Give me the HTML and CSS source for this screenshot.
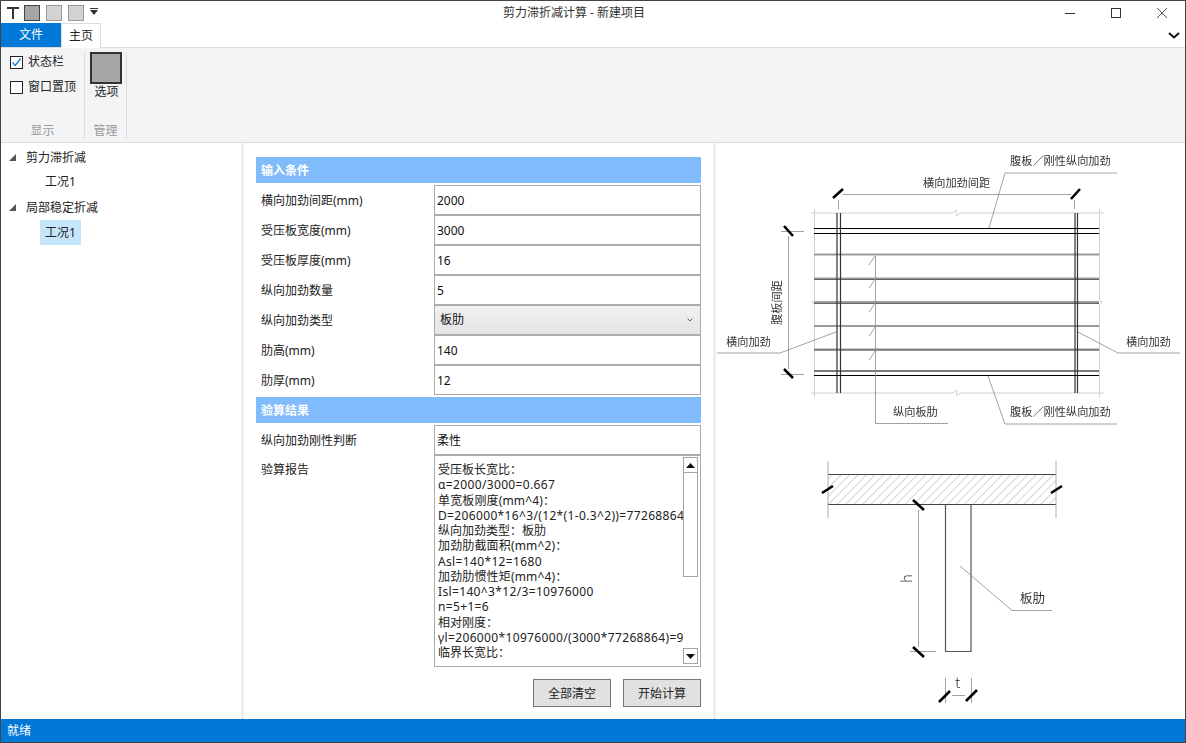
FILE: index.html
```html
<!DOCTYPE html>
<html lang="zh">
<head>
<meta charset="utf-8">
<title>剪力滞折减计算 - 新建项目</title>
<link rel="stylesheet" href="styles.css">
</head>
<body>
<div class="window">
  <header class="titlebar">
    <div class="quick">
      <svg class="qa-t" width="12" height="12" viewBox="0 0 12 12"><path d="M0 1h12M6 1v11" fill="none" stroke="#333" stroke-width="2"/></svg>
      <span class="qa qa-dark"></span>
      <span class="qa qa-light"></span>
      <span class="qa qa-light"></span>
      <svg class="qa-more" width="8" height="7" viewBox="0 0 8 7"><path d="M0 0h8v1H0zM0 2h8L4 7z" fill="#333"/></svg>
    </div>
    <div class="title">剪力滞折减计算 - 新建项目</div>
    <div class="winbtns">
      <span class="winbtn"><svg width="10" height="10" viewBox="0 0 10 10"><path d="M0 5.500h10" stroke="#333" fill="none"/></svg></span>
      <span class="winbtn"><svg width="10" height="10" viewBox="0 0 10 10"><rect x=".5" y=".5" width="9" height="9" stroke="#333" fill="none"/></svg></span>
      <span class="winbtn"><svg width="10" height="10" viewBox="0 0 10 10"><path d="M0 0l10 10M10 0L0 10" stroke="#444" stroke-width=".9" fill="none"/></svg></span>
    </div>
  </header>
  <nav class="tabs">
    <div class="tab-file">文件</div>
    <div class="tab-home">主页</div>
    <svg class="collapse" width="12" height="7" viewBox="0 0 12 7"><path d="M1 1l5 4.500L11 1" fill="none" stroke="#111" stroke-width="2"/></svg>
  </nav>
  <section class="ribbon">
    <div class="group group-show">
      <div class="group-body checks">
        <label class="check"><span class="box"><svg width="11" height="11" viewBox="0 0 11 11"><path d="M1.500 5.500l2.800 3L9.500 1.500" fill="none" stroke="#1e7fd8" stroke-width="1.4"/></svg></span>状态栏</label>
        <label class="check"><span class="box"></span>窗口置顶</label>
      </div>
      <div class="group-label">显示</div>
    </div>
    <div class="group group-manage">
      <div class="group-body option">
        <span class="option-icon"></span>
        <span class="option-text">选项</span>
      </div>
      <div class="group-label">管理</div>
    </div>
  </section>
  <main class="content">
    <aside class="tree">
      <div class="node"><span class="arrow"></span>剪力滞折减</div>
      <div class="leaf"><span class="leaf-text">工况1</span></div>
      <div class="node"><span class="arrow"></span>局部稳定折减</div>
      <div class="leaf"><span class="leaf-text selected">工况1</span></div>
    </aside>
    <div class="splitter"></div>
    <section class="form">
      <h2 class="band">输入条件</h2>
      <div class="grid">
        <div class="label">横向加劲间距(mm)</div><div class="field">2000</div>
        <div class="label">受压板宽度(mm)</div><div class="field">3000</div>
        <div class="label">受压板厚度(mm)</div><div class="field">16</div>
        <div class="label">纵向加劲数量</div><div class="field">5</div>
        <div class="label">纵向加劲类型</div>
        <div class="field select">板肋<svg width="6" height="4" viewBox="0 0 6 4"><path d="M.5.5L3 3 5.500.5" fill="none" stroke="#666"/></svg></div>
        <div class="label">肋高(mm)</div><div class="field">140</div>
        <div class="label">肋厚(mm)</div><div class="field">12</div>
      </div>
      <h2 class="band band-second">验算结果</h2>
      <div class="grid">
        <div class="label">纵向加劲刚性判断</div><div class="field">柔性</div>
        <div class="label label-top">验算报告</div>
        <div class="report">
          <div class="report-text">
            <div>受压板长宽比：</div>
            <div class="latin">α=2000/3000=0.667</div>
            <div class="mixed">单宽板刚度(mm^4)：</div>
            <div class="latin">D=206000*16^3/(12*(1-0.3^2))=77268864</div>
            <div>纵向加劲类型：板肋</div>
            <div class="mixed">加劲肋截面积(mm^2)：</div>
            <div class="latin">Asl=140*12=1680</div>
            <div class="mixed">加劲肋惯性矩(mm^4)：</div>
            <div class="latin">Isl=140^3*12/3=10976000</div>
            <div class="latin">n=5+1=6</div>
            <div>相对刚度：</div>
            <div class="latin">γl=206000*10976000/(3000*77268864)=9.75</div>
            <div>临界长宽比：</div>
          </div>
          <div class="scrollbar">
            <span class="sb-btn"><svg width="9" height="5" viewBox="0 0 9 5"><path d="M4.500 0L9 5H0z" fill="#111"/></svg></span>
            <span class="sb-thumb"></span>
            <span class="sb-space"></span>
            <span class="sb-btn"><svg width="9" height="5" viewBox="0 0 9 5"><path d="M0 0h9L4.500 5z" fill="#111"/></svg></span>
          </div>
        </div>
      </div>
      <div class="actions">
        <button class="btn">全部清空</button>
        <button class="btn">开始计算</button>
      </div>
    </section>
    <div class="splitter"></div>
    <section class="drawing">
      <svg class="cad" width="469" height="576" viewBox="716 143 469 576">
        <defs>
          <pattern id="hatch" width="6" height="6" patternUnits="userSpaceOnUse" patternTransform="rotate(45)">
            <path d="M0 0V6" stroke="#aaa" stroke-width="1" fill="none"/>
          </pattern>
        </defs>
        <g class="thin">
          <path d="M811 213H953l3-3 1 6 3-3H1104M811 393H953l3-3 1 6 3-3H1104"/>
          <path d="M814.500 209V300l-3 2 3 2V397M1099.500 209V300l3 2-3 2V397"/>
        </g>
        <g class="rib">
          <path d="M814 254.500H1099M814 278.500H1099M814 302H1099M814 326H1099M814 349.500H1099M814 371H1099"/>
        </g>
        <g class="rib-core">
          <path d="M814 279.500H1099M814 303.500H1099M814 350H1099M814 371H1099"/>
        </g>
        <g class="stiff">
          <path d="M837 213V393M840.500 213V393M1075 213V393M1077.500 213V393"/>
        </g>
        <g class="flange">
          <path d="M814 228.500H1099M814 233.500H1099M814 375.500H1099"/>
        </g>
        <g class="dim">
          <path d="M843 194.500H1071M838.500 200V209M1074.500 200V209"/>
          <path d="M788.500 236V369M781 231.500H804M781 374.500H804"/>
          <path d="M989 228L1005 173H1117M717 353H780L836 332M1078 332L1118 353H1180"/>
          <path d="M875.500 256V423.500H948M988 376L1005 424H1117"/>
          <path d="M875 256l-6 9M875 279l-6 9M875 303l-6 9M875 327l-6 9M875 351l-6 9"/>
        </g>
        <g class="tick">
          <path d="M833 198L843 189M1071 199L1080 189M784 226L793 236M784 369L793 378"/>
        </g>
        <g class="cadtext">
          <text x="1010" y="165">腹板／刚性纵向加劲</text>
          <text x="923" y="187">横向加劲间距</text>
          <text x="726" y="346">横向加劲</text>
          <text x="1126" y="346">横向加劲</text>
          <text x="893" y="416">纵向板肋</text>
          <text x="1010" y="416">腹板／刚性纵向加劲</text>
          <text x="781" y="325" transform="rotate(-90 781 325)">腹板间距</text>
        </g>

        <rect x="828" y="474.500" width="228" height="30" fill="url(#hatch)"/>
        <path class="section" d="M828 474.500H1056M828 504.500H1056"/>
        <path class="section-thin" d="M828 461V518M1056 461V518"/>
        <path class="web" d="M945.500 504V651.500H971V504"/>
        <g class="dim">
          <path d="M918.500 510V647M910 651.500H936M945.500 678V703M971.500 678V703M952 695.500H965M960 566L1012 610.500H1052"/>
        </g>
        <g class="tick">
          <path d="M822 493L833 486M1051 493L1062 486M913 500L924 510M913 647L924 657M939 702L950 691M966 701L977 690"/>
        </g>
        <g class="cadtext">
          <text class="big" x="1020" y="603">板肋</text>
          <text class="big h" x="912" y="583" transform="rotate(-90 912 583)">h</text>
          <text class="big h" x="955" y="688">t</text>
        </g>
      </svg>
    </section>
  </main>
  <footer class="status">就绪</footer>
</div>
</body>
</html>
```
FILE: styles.css
```css
* { box-sizing: border-box; }
html, body { margin: 0; padding: 0; background: #fff; }
body {
  font-family: "Noto Sans", "Noto Sans CJK SC", sans-serif;
  font-size: 12px;
  color: #1c1c1c;
}
.window {
  width: 1186px;
  height: 743px;
  border: 1px solid #444;
  display: flex;
  flex-direction: column;
  overflow: hidden;
}
.titlebar {
  height: 22px;
  display: grid;
  grid-template-columns: 1fr auto 1fr;
  align-items: center;
  flex: none;
}
.quick { display: flex; align-items: center; padding-left: 6px; }
.qa-t { margin-right: 5px; margin-top: -1px; }
.qa { width: 16px; height: 16px; margin-right: 6px; border: 1px solid #999; background: #d3d3d3; }
.qa-dark { background: #a6a6a6; border-color: #444; }
.qa-more { margin-top: -3px; }
.title { text-align: center; color: #333; line-height: 24px; transform: translateX(-19px); }
.winbtns { display: flex; justify-content: flex-end; }
.winbtn { width: 46px; height: 22px; display: flex; align-items: center; justify-content: center; }
.tabs {
  height: 25px;
  display: flex;
  align-items: stretch;
  flex: none;
  border-bottom: 1px solid #dcdcdc;
}
.tab-file {
  width: 60px;
  height: 24px;
  background: #0078d7;
  color: #fff;
  text-align: center;
  line-height: 23px;
}
.tab-home {
  width: 40px;
  height: 25px;
  background: #fff;
  border: 1px solid #dcdcdc;
  border-bottom: 0;
  text-align: center;
  line-height: 24px;
  color: #222;
}
.collapse { margin-left: auto; margin-right: 5px; margin-top: 9px; }
.ribbon {
  height: 95px;
  flex: none;
  background: #f3f4f6;
  border-bottom: 1px solid #dcdcdc;
  display: flex;
  padding: 4px 0;
}
.group {
  display: flex;
  flex-direction: column;
  border-right: 1px solid #dadbdd;
}
.group-show { width: 84px; }
.group-manage { width: 42px; }
.group-body { flex: 1; }
.group-label { color: #9a9a9a; text-align: center; line-height: 14px; height: 14px; }
.checks { display: flex; flex-direction: column; gap: 9px; padding: 2px 0 0 9px; }
.check { display: flex; align-items: center; height: 16px; line-height: 16px; color: #222; white-space: nowrap; }
.box {
  width: 13px;
  height: 13px;
  border: 1px solid #222;
  background: #fff;
  margin-right: 5px;
  display: flex;
  align-items: center;
  justify-content: center;
}
.option { display: flex; flex-direction: column; align-items: center; color: #222; padding-left: 1px; }
.option-icon { width: 32px; height: 32px; background: #a6a6a6; border: 2px solid #333; }
.option-text { line-height: 14px; margin-top: 1px; padding-left: 1px; }
.content { flex: 1; display: flex; min-height: 0; }
.tree { width: 240px; padding-top: 2px; flex: none; }
.node { height: 25px; line-height: 25px; padding-left: 25px; position: relative; color: #222; }
.leaf { height: 25px; padding-left: 39px; }
.leaf-text { display: inline-block; width: 41px; height: 25px; line-height: 23px; padding-left: 5px; color: #222; }
.selected { background: #c5e5fb; line-height: 25px; }
.arrow {
  position: absolute;
  left: 8px;
  top: 9px;
  width: 0;
  height: 0;
  border-style: solid;
  border-width: 0 0 7px 7px;
  border-color: transparent transparent #555 transparent;
}
.splitter { width: 3px; background: #eeeeee; flex: none; }
.form { width: 469px; flex: none; padding: 14px 12px 0; }
.band {
  margin: 0;
  height: 26px;
  line-height: 28px;
  padding-left: 5px;
  background: #80bbfb;
  color: #fff;
  font-size: 12px;
  font-weight: 700;
}
.band-second { margin-top: 2px; }
.grid {
  display: grid;
  grid-template-columns: 178px 267px;
  margin-top: 2px;
}
.label { height: 30px; line-height: 32px; padding-left: 5px; color: #222; }
.label-top { line-height: 30px; }
.field {
  height: 30px;
  border: 1px solid #ababab;
  line-height: 30px;
  padding-left: 2px;
  background: #fff;
  color: #111;
}
.select {
  background: linear-gradient(#f1f1f1, #e4e4e4);
  padding-left: 5px;
  display: flex;
  align-items: center;
  justify-content: space-between;
  padding-right: 7px;
}
.report {
  height: 212px;
  border: 1px solid #ababab;
  display: flex;
  padding: 1px 2px 2px 3px;
  overflow: hidden;
}
.report-text {
  flex: 1;
  min-width: 0;
  overflow: hidden;
  white-space: nowrap;
  line-height: 15.25px;
  padding-top: 5px;
  color: #222;
}
.latin { letter-spacing: .35px; }
.mixed { letter-spacing: .15px; }
.scrollbar { width: 15px; flex: none; display: flex; flex-direction: column; }
.sb-btn {
  height: 16px;
  border: 1px solid #a8a59a;
  display: flex;
  align-items: center;
  justify-content: center;
  flex: none;
}
.sb-thumb { height: 104px; border: 1px solid #a8a59a; border-top: 0; flex: none; }
.sb-space { flex: 1; }
.actions { display: flex; justify-content: flex-end; gap: 12px; margin-top: 12px; }
.btn {
  width: 78px;
  height: 28px;
  padding: 0;
  background: #e1e1e1;
  border: 1px solid #777;
  font: inherit;
  color: #222;
}
.drawing { flex: 1; min-width: 0; }
.cad { display: block; filter: blur(.35px); }
.cad path { fill: none; }
.thin path { stroke: #cfcfcf; stroke-width: 1; }
.rib path { stroke: #9a9a9a; stroke-width: 2.2; }
.rib-core path { stroke: #555; stroke-width: .9; }
.stiff path { stroke: #333; stroke-width: 1.2; }
.flange path { stroke: #000; stroke-width: 1; }
.dim path { stroke: #8a8a8a; stroke-width: .8; }
.tick path { stroke: #000; stroke-width: 2.6; }
.section { stroke: #444; stroke-width: 1; }
.section-thin { stroke: #999; stroke-width: .8; }
.web { stroke: #555; stroke-width: 1.2; }
.cadtext text { font-size: 11.200px; fill: #333; font-family: "Noto Sans CJK SC", sans-serif; }
.cadtext .big { font-size: 12.500px; }
.cadtext .h { font-size: 15px; font-weight: 300; }
.status {
  height: 23px;
  flex: none;
  background: #0078d7;
  color: #fff;
  line-height: 24px;
  padding-left: 6px;
}
```
